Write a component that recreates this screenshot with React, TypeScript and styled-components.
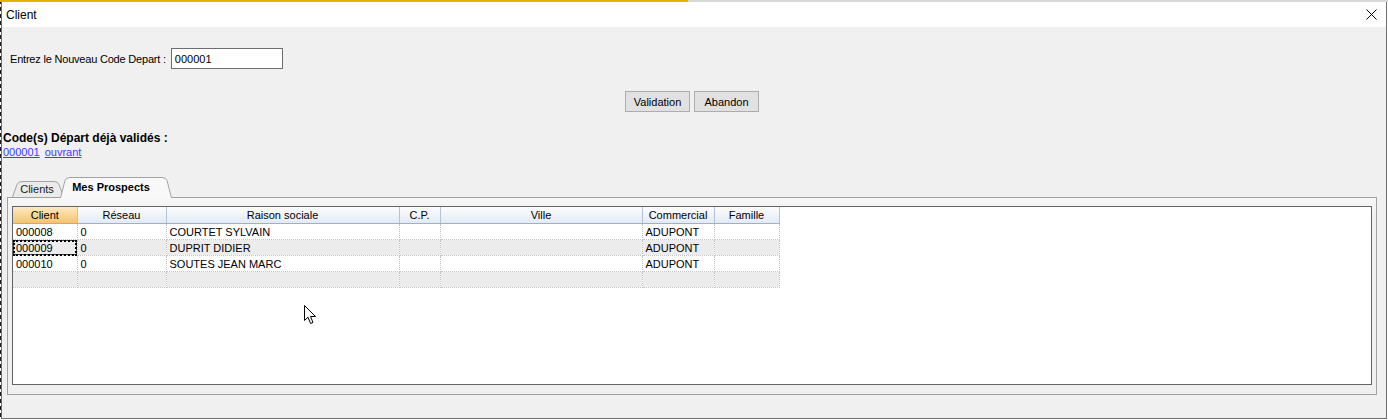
import React from "react";
import styled, { createGlobalStyle } from "styled-components";

const GlobalStyle = createGlobalStyle`
  html, body {
    margin: 0;
    padding: 0;
    background: #ffffff;
  }
  body {
    font-family: "Liberation Sans", Arial, sans-serif;
    font-size: 11px;
    color: #000;
  }
`;

// what peeks out from the application behind the dialog
const Screen = styled.div`
  position: relative;
  width: 1388px;
  height: 420px;
  box-sizing: border-box;
  padding: 2px 1px 1px 1px;
  display: flex;
  background:
    linear-gradient(to right, #e7b100 0 688px, #d9d9d9 688px) top / 100% 2px no-repeat,
    repeating-linear-gradient(to bottom, #1a1a1a 0 4px, #ffffff 4px 7px) left / 1px 100% no-repeat,
    #ffffff;
`;

const Window = styled.div`
  flex: 1;
  display: flex;
  flex-direction: column;
  border: 1px solid #6f6f6f;
  border-top: none;
  background: #f0f0f0;
`;

const TitleBar = styled.div`
  height: 25px;
  display: flex;
  align-items: center;
  justify-content: space-between;
  padding: 0 9px 0 4px;
  background: #ffffff;
  font-family: "Liberation Sans", Arial, sans-serif;
  font-size: 12px;
`;

const Body = styled.div`
  flex: 1;
  display: flex;
  flex-direction: column;
  padding-top: 21px;
`;

const CodeRow = styled.div`
  display: flex;
  align-items: center;
  gap: 5px;
  padding-left: 8px;
  height: 21px;
`;

const Label = styled.span`
  letter-spacing: -0.2px;
`;

const Input = styled.div`
  width: 107px;
  height: 19px;
  border: 1px solid #6e6e6e;
  background: #fff;
  display: flex;
  align-items: center;
  padding-left: 3px;
  box-sizing: content-box;
`;

const ButtonRow = styled.div`
  display: flex;
  justify-content: center;
  gap: 4px;
  margin-top: 22px;
  padding-right: 4px;
`;

const Button = styled.button<{ $w: number }>`
  width: ${(p) => p.$w}px;
  height: 21px;
  border: 1px solid #adadad;
  background: #e1e1e1;
  font-family: "Liberation Sans", Arial, sans-serif;
  font-size: 11px;
  color: #000;
  padding: 0;
`;

const Heading = styled.div`
  margin-top: 19px;
  padding-left: 1px;
  font-weight: bold;
  font-size: 12px;
  line-height: 14px;
`;

const LinkRow = styled.div`
  display: flex;
  gap: 5px;
  padding-left: 1px;
  line-height: 14px;
`;

const Link = styled.span`
  color: #3c3cff;
  text-decoration: underline;
`;

const TabStrip = styled.div`
  margin-top: 18px;
  padding-left: 10px;
  height: 20px;
  display: flex;
  align-items: flex-end;
`;

const Tab = styled.div<{ $w: number; $active?: boolean }>`
  position: relative;
  width: ${(p) => p.$w}px;
  height: ${(p) => (p.$active ? 21 : 16)}px;
  margin-left: ${(p) => (p.$active ? -4 : 0)}px;
  margin-bottom: ${(p) => (p.$active ? -1 : 0)}px;
  z-index: ${(p) => (p.$active ? 2 : 1)};
  display: flex;
  align-items: center;
  justify-content: center;
  padding-bottom: ${(p) => (p.$active ? 2 : 0)}px;
  box-sizing: border-box;
  font-weight: ${(p) => (p.$active ? "bold" : "normal")};
  color: ${(p) => (p.$active ? "#000" : "#1a1a1a")};
  svg {
    position: absolute;
    left: 0;
    top: 0;
  }
  span {
    position: relative;
    margin-right: ${(p) => (p.$active ? 10 : 2)}px;
  }
`;

const Panel = styled.div`
  flex: 1;
  margin: 0 9px 23px 5px;
  border: 1px solid #a0a0a0;
  padding: 8px 4px 9px 4px;
  display: flex;
  background: linear-gradient(#f7f7f7, #f0f0f0 20px);
`;

const GridBox = styled.div`
  position: relative;
  flex: 1;
  border: 1px solid #646464;
  background: #fff;
`;

const Table = styled.table`
  border-collapse: collapse;
  table-layout: fixed;
  width: 766px;
  font-size: 11px;
`;

const Th = styled.th<{ $selected?: boolean }>`
  height: 16px;
  padding: 0;
  font-weight: normal;
  text-align: center;
  border-right: 1px solid #b5c3d6;
  border-bottom: 1px solid #9db1cc;
  background: ${(p) =>
    p.$selected
      ? "linear-gradient(#fde9c2, #f6c46b)"
      : "linear-gradient(#fdfdfe, #e3eaf4)"};
`;

const Tr = styled.tr<{ $alt?: boolean }>`
  background: ${(p) => (p.$alt ? "#ececec" : "#ffffff")};
`;

const Td = styled.td<{ $focus?: boolean }>`
  height: 15px;
  padding: 0 0 0 3px;
  white-space: nowrap;
  overflow: hidden;
  border-right: 1px dotted #c4c4c4;
  border-bottom: 1px dotted #c4c4c4;
  outline: ${(p) => (p.$focus ? "2px dotted #000" : "none")};
  outline-offset: -2px;
  box-shadow: ${(p) => (p.$focus ? "inset 0 0 0 1px #444" : "none")};
`;

const Cursor = styled.svg`
  position: absolute;
  left: 291px;
  top: 98px;
`;

const columns = [
  { label: "Client", w: 64 },
  { label: "Réseau", w: 89 },
  { label: "Raison sociale", w: 233 },
  { label: "C.P.", w: 41 },
  { label: "Ville", w: 202 },
  { label: "Commercial", w: 72 },
  { label: "Famille", w: 65 },
];

const rows = [
  ["000008", "0", "COURTET SYLVAIN", "", "", "ADUPONT", ""],
  ["000009", "0", "DUPRIT DIDIER", "", "", "ADUPONT", ""],
  ["000010", "0", "SOUTES JEAN MARC", "", "", "ADUPONT", ""],
  ["", "", "", "", "", "", ""],
];

function TabShape({ w, h, active }: { w: number; h: number; active?: boolean }) {
  const s = 6;
  const outline = `M0.5 ${h} L${s - 1} 3.5 Q${s} 0.5 ${s + 4} 0.5 L${w - s - 4} 0.5 Q${w - s} 0.5 ${w - s + 1} 3.5 L${w - 0.5} ${h}`;
  return (
    <svg width={w} height={h} viewBox={`0 0 ${w} ${h}`}>
      <path d={outline + " Z"} fill={active ? "#f8f8f8" : "#ebebeb"} stroke="none" />
      <path d={outline} fill="none" stroke="#a3a3a3" strokeWidth="1" />
    </svg>
  );
}

export default function App() {
  return (
    <Screen>
      <GlobalStyle />
      <Window>
        <TitleBar>
          <span>Client</span>
          <svg width="11" height="11" viewBox="0 0 11 11">
            <path d="M0.5 0.5 L10.5 10.5 M10.5 0.5 L0.5 10.5" stroke="#000" strokeWidth="1" />
          </svg>
        </TitleBar>
        <Body>
          <CodeRow>
            <Label>Entrez le Nouveau Code Depart :</Label>
            <Input>000001</Input>
          </CodeRow>
          <ButtonRow>
            <Button $w={65}>Validation</Button>
            <Button $w={65}>Abandon</Button>
          </ButtonRow>
          <Heading>Code(s) Départ déjà validés :</Heading>
          <LinkRow>
            <Link>000001</Link>
            <Link>ouvrant</Link>
          </LinkRow>
          <TabStrip>
            <Tab $w={52}>
              <TabShape w={52} h={16} />
              <span>Clients</span>
            </Tab>
            <Tab $w={112} $active>
              <TabShape w={112} h={21} active />
              <span>Mes Prospects</span>
            </Tab>
          </TabStrip>
          <Panel>
            <GridBox>
              <Table>
                <colgroup>
                  {columns.map((c) => (
                    <col key={c.label} style={{ width: c.w }} />
                  ))}
                </colgroup>
                <thead>
                  <tr>
                    {columns.map((c, i) => (
                      <Th key={c.label} $selected={i === 0}>
                        {c.label}
                      </Th>
                    ))}
                  </tr>
                </thead>
                <tbody>
                  {rows.map((r, ri) => (
                    <Tr key={ri} $alt={ri % 2 === 1}>
                      {r.map((v, ci) => (
                        <Td key={ci} $focus={ri === 1 && ci === 0}>
                          {v}
                        </Td>
                      ))}
                    </Tr>
                  ))}
                </tbody>
              </Table>
              <Cursor width="13" height="20" viewBox="0 0 13 20">
                <path
                  d="M0.5 0.5 L0.5 15.5 L4 12.2 L6.6 18.5 L9 17.5 L6.5 11.5 L11.5 11.5 Z"
                  fill="#fff"
                  stroke="#000"
                  strokeWidth="1"
                  strokeLinejoin="miter"
                />
              </Cursor>
            </GridBox>
          </Panel>
        </Body>
      </Window>
    </Screen>
  );
}
